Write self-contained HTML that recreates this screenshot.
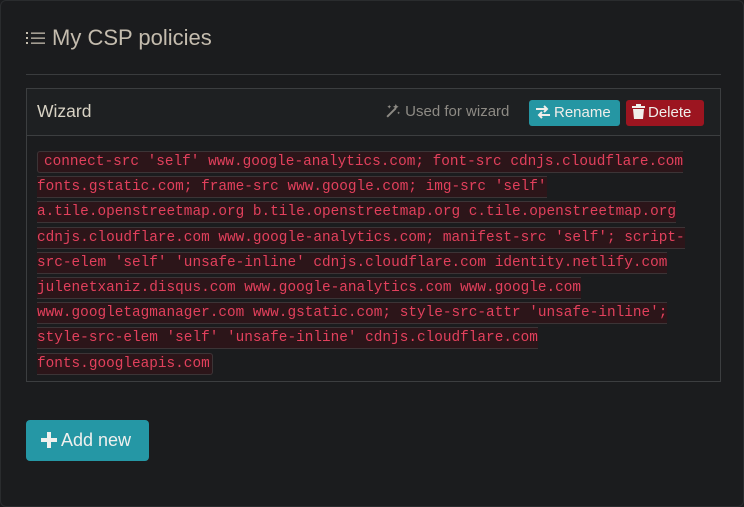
<!DOCTYPE html>
<html><head><meta charset="utf-8"><style>
html,body{margin:0;padding:0;background:#1b1c1e;}
body{width:744px;height:507px;overflow:hidden;font-family:"Liberation Sans",sans-serif;position:relative;}
.outer{position:absolute;left:0;top:0;width:742px;height:505px;border:1px solid #2a2c2e;border-radius:6px;background:#1b1c1e;}
h1{position:absolute;left:26px;top:22px;margin:0;font-weight:normal;font-size:22px;color:#c4bcae;line-height:32px;}
h1 svg{vertical-align:-1px;margin-right:6px}
.hr{position:absolute;left:26px;top:74px;width:695px;height:1px;background:#3a3c3e;}
.card{position:absolute;left:26px;top:88px;width:693px;height:292px;border:1px solid #3c3e40;}
.head{height:46px;border-bottom:1px solid #3c3e40;background:#1e2022;position:relative;}
.head .t{position:absolute;left:10px;top:12px;font-size:17.5px;color:#d8d2c4;}
.used{position:absolute;left:358px;top:14px;font-size:15px;color:#8d8a84;}
.btn{position:absolute;top:11px;height:26px;border-radius:3px;color:#f0eeea;font-size:15px;line-height:26px;box-sizing:border-box;padding-left:6px;}
.btn svg{margin-right:3px}
.ren{left:502px;width:91px;background:#2596a3;}
.del{left:599px;width:78px;background:#9c1520;}
.body{padding:14px 10px 0 10px;}
code{font-family:"Liberation Mono",monospace;font-size:14.4px;line-height:25.2px;color:#e2405c;background:#2c1519;border:1px solid #3c3436;border-radius:3px;padding:2px 2px 2px 6px;}
.add{position:absolute;left:26px;top:420px;width:123px;height:41px;background:#2597a5;border-radius:4px;font-size:18px;line-height:41px;box-sizing:border-box;padding-left:15px;color:#f0f0ee;}
.add svg{margin-right:4px}
</style></head><body>
<div class="outer"></div>
<h1><svg width="20" height="16" viewBox="0 0 20 16"><g fill="#c4bcae"><rect x="0" y="2" width="2" height="2"/><rect x="0" y="7" width="2" height="2"/><rect x="0" y="12" width="2" height="2"/><rect x="5" y="2.5" width="14" height="1.3"/><rect x="5" y="7.5" width="14" height="1.3"/><rect x="5" y="12.5" width="14" height="1.3"/></g></svg>My CSP policies</h1>
<div class="hr"></div>
<div class="card">
<div class="head"><span class="t">Wizard</span>
<span class="used"><svg width="16" height="15" viewBox="0 0 16 16" style="vertical-align:-2px"><path d="M1 14 L10 5 L11.5 6.5 L2.5 15.5Z" fill="#8d8a84"/><path d="M11 1l1 2 2 1-2 1-1 2-1-2-2-1 2-1z M4 2l.6 1.2L6 4l-1.4.6L4 6 3.4 4.6 2 4l1.4-.8z M14 9l.5 1 1 .5-1 .5-.5 1-.5-1-1-.5 1-.5z" fill="#8d8a84"/></svg> Used for wizard</span>
<span class="btn ren"><svg width="16" height="14" viewBox="0 0 16 14" style="vertical-align:-2px"><path d="M1 4h11M9 1l3 3-3 3M15 10H4M7 7l-3 3 3 3" stroke="#f0eeea" stroke-width="2" fill="none"/></svg>Rename</span>
<span class="btn del"><svg width="13" height="15" viewBox="0 0 13 15" style="vertical-align:-2px"><path d="M0 2h13v2H0zM4 0h5v2H4zM1 5h11l-1 10H2z" fill="#f0eeea"/></svg>Delete</span>
</div>
<div class="body"><code>connect-src 'self' www.google-analytics.com; font-src cdnjs.cloudflare.com<br>fonts.gstatic.com; frame-src www.google.com; img-src 'self'<br>a.tile.openstreetmap.org b.tile.openstreetmap.org c.tile.openstreetmap.org<br>cdnjs.cloudflare.com www.google-analytics.com; manifest-src 'self'; script-<br>src-elem 'self' 'unsafe-inline' cdnjs.cloudflare.com identity.netlify.com<br>julenetxaniz.disqus.com www.google-analytics.com www.google.com<br>www.googletagmanager.com www.gstatic.com; style-src-attr 'unsafe-inline';<br>style-src-elem 'self' 'unsafe-inline' cdnjs.cloudflare.com<br>fonts.googleapis.com</code></div>
</div>
<div class="add"><svg width="16" height="16" viewBox="0 0 16 16" style="vertical-align:-2px"><path d="M6 0h4v6h6v4h-6v6H6v-6H0V6h6z" fill="#f0f0ee"/></svg>Add new</div>
</body></html>
